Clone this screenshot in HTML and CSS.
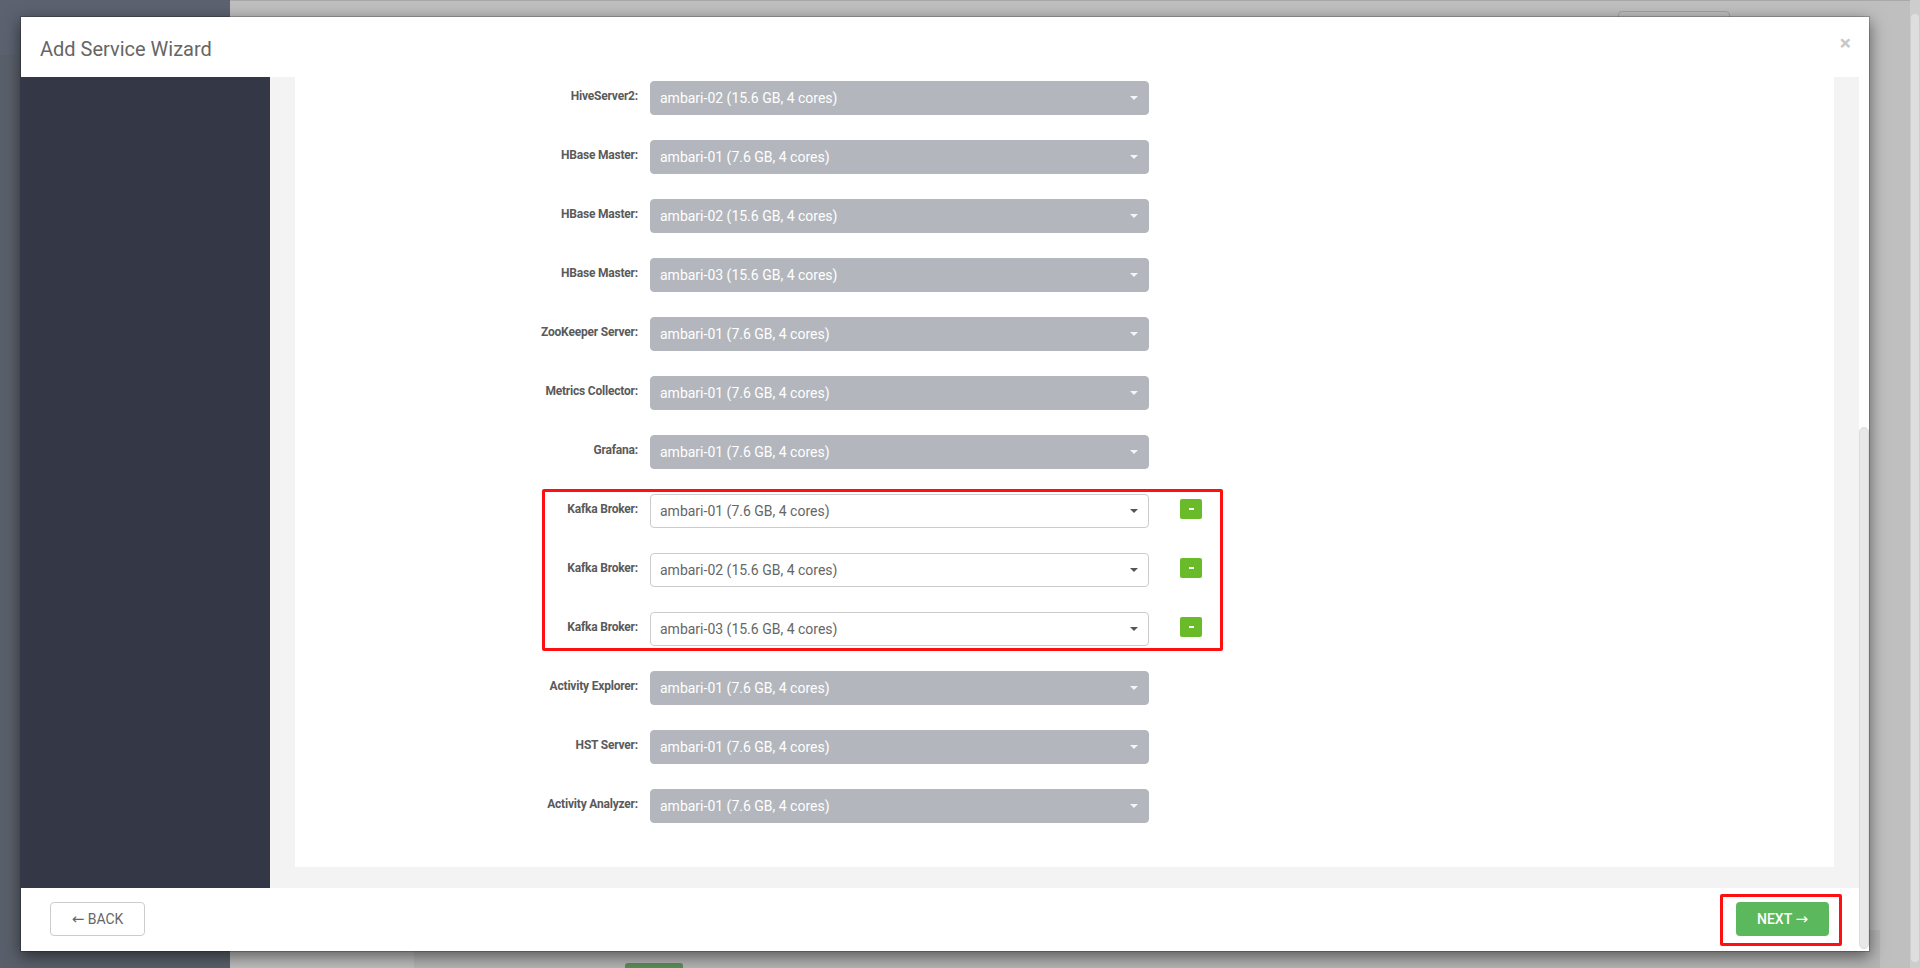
FILE: index.html
```html
<!DOCTYPE html>
<html>
<head>
  <title>Add Service Wizard</title>
  <link rel="stylesheet" href="styles.css">
</head>
<body>
  <div class="page">
    <div class="bg-side">
      <div class="bg-side-top"></div>
    </div>
    <div class="bg-main">
      <div class="bg-topbar">
        <div class="bg-outline-btn"></div>
      </div>
      <div class="bg-content">
        <div class="bg-card">
          <div class="bg-green-btn"></div>
        </div>
      </div>
    </div>
    <div class="page-scroll">
      <div class="page-scroll-thumb"></div>
    </div>
  </div>

  <div class="modal">
    <div class="modal-main">
      <div class="modal-header">
        <h4 class="modal-title">Add Service Wizard</h4>
        <span class="close">&times;</span>
      </div>

      <div class="modal-body">
        <div class="wizard-nav"></div>
        <div class="wizard-content">
          <div class="panel">
            <div class="form-row">
              <label class="control-label">HiveServer2:</label>
              <div class="select-wrap disabled">
                <select disabled><option>ambari-02 (15.6 GB, 4 cores)</option></select>
              </div>
            </div>
            <div class="form-row">
              <label class="control-label">HBase Master:</label>
              <div class="select-wrap disabled">
                <select disabled><option>ambari-01 (7.6 GB, 4 cores)</option></select>
              </div>
            </div>
            <div class="form-row">
              <label class="control-label">HBase Master:</label>
              <div class="select-wrap disabled">
                <select disabled><option>ambari-02 (15.6 GB, 4 cores)</option></select>
              </div>
            </div>
            <div class="form-row">
              <label class="control-label">HBase Master:</label>
              <div class="select-wrap disabled">
                <select disabled><option>ambari-03 (15.6 GB, 4 cores)</option></select>
              </div>
            </div>
            <div class="form-row">
              <label class="control-label">ZooKeeper Server:</label>
              <div class="select-wrap disabled">
                <select disabled><option>ambari-01 (7.6 GB, 4 cores)</option></select>
              </div>
            </div>
            <div class="form-row">
              <label class="control-label">Metrics Collector:</label>
              <div class="select-wrap disabled">
                <select disabled><option>ambari-01 (7.6 GB, 4 cores)</option></select>
              </div>
            </div>
            <div class="form-row">
              <label class="control-label">Grafana:</label>
              <div class="select-wrap disabled">
                <select disabled><option>ambari-01 (7.6 GB, 4 cores)</option></select>
              </div>
            </div>

            <div class="kafka-group">
              <div class="form-row">
                <label class="control-label">Kafka Broker:</label>
                <div class="select-wrap">
                  <select><option>ambari-01 (7.6 GB, 4 cores)</option></select>
                </div>
                <button class="btn-remove" type="button"><span></span></button>
              </div>
              <div class="form-row">
                <label class="control-label">Kafka Broker:</label>
                <div class="select-wrap">
                  <select><option>ambari-02 (15.6 GB, 4 cores)</option></select>
                </div>
                <button class="btn-remove" type="button"><span></span></button>
              </div>
              <div class="form-row">
                <label class="control-label">Kafka Broker:</label>
                <div class="select-wrap">
                  <select><option>ambari-03 (15.6 GB, 4 cores)</option></select>
                </div>
                <button class="btn-remove" type="button"><span></span></button>
              </div>
            </div>

            <div class="form-row">
              <label class="control-label">Activity Explorer:</label>
              <div class="select-wrap disabled">
                <select disabled><option>ambari-01 (7.6 GB, 4 cores)</option></select>
              </div>
            </div>
            <div class="form-row">
              <label class="control-label">HST Server:</label>
              <div class="select-wrap disabled">
                <select disabled><option>ambari-01 (7.6 GB, 4 cores)</option></select>
              </div>
            </div>
            <div class="form-row">
              <label class="control-label">Activity Analyzer:</label>
              <div class="select-wrap disabled">
                <select disabled><option>ambari-01 (7.6 GB, 4 cores)</option></select>
              </div>
            </div>
          </div>
        </div>
      </div>

      <div class="modal-footer">
        <button class="btn btn-back" type="button"><span class="arrow">&larr;</span> BACK</button>
        <div class="next-mark">
          <button class="btn btn-next" type="button">NEXT <span class="arrow">&rarr;</span></button>
        </div>
      </div>
    </div>
    <div class="modal-scroll">
      <div class="modal-scroll-thumb"></div>
    </div>
  </div>
</body>
</html>
```

FILE: styles.css
```css
/* page behind the dialog */
html, body {
  margin: 0;
  height: 968px;
  overflow: hidden;
}
body {
  font-family: Roboto, 'Liberation Sans', Arial, sans-serif;
  position: relative;
}
.page {
  display: flex;
  height: 968px;
}
.bg-side {
  width: 230px;
  background-color: #5a606b;
}
.bg-side-top {
  height: 55px;
  background-color: #5c6270;
}
.bg-main {
  flex: 1;
  background-color: #bfbfbf;
  border-top: 1px solid #a9a9a9;
}
.bg-topbar {
  height: 54px;
  display: flex;
  justify-content: flex-end;
  padding-right: 180px;
  padding-top: 10px;
  box-sizing: border-box;
}
.bg-outline-btn {
  width: 112px;
  height: 34px;
  border: 1px solid #a3a3a3;
  border-radius: 4px;
  box-sizing: border-box;
}
.bg-content {
  padding: 875px 30px 0 184px;
}
.bg-card {
  height: 60px;
  background-color: #b5b5b5;
  padding: 33px 0 0 211px;
  box-sizing: border-box;
}
.bg-green-btn {
  width: 58px;
  height: 20px;
  background-color: #5a8f5a;
  border-radius: 3px 3px 0 0;
}
.page-scroll {
  width: 10px;
  background-color: #cdcdcd;
  padding: 14px 1px 6px;
  box-sizing: border-box;
}
.page-scroll-thumb {
  height: 100%;
  background-color: #dedede;
  border-radius: 4px;
}

/* dialog */
.modal {
  position: absolute;
  top: 16px;
  left: 20px;
  width: 1850px;
  height: 936px;
  display: flex;
  background-color: #fff;
  box-shadow: 0 5px 15px rgba(0, 0, 0, 0.5);
  border: 1px solid rgba(0, 0, 0, 0.2);
  box-sizing: border-box;
  background-clip: padding-box;
}
.modal-main {
  width: 1839px;
  display: flex;
  flex-direction: column;
  margin-left: -1px;
  margin-top: -1px;
}
.modal-header {
  height: 61px;
  display: flex;
  align-items: center;
  justify-content: space-between;
  padding: 5px 8px 0 20px;
  box-sizing: border-box;
}
.modal-title {
  margin: 0;
  font-size: 20px;
  font-weight: 400;
  color: #666;
}
.close {
  font-size: 21px;
  font-weight: bold;
  color: #c8c8c8;
  line-height: 1;
  margin-bottom: 10px;
}
.modal-body {
  flex: 1;
  display: flex;
}
.wizard-nav {
  width: 250px;
  background-color: #343846;
}
.wizard-content {
  flex: 1;
  background-color: #f3f3f3;
  padding: 0 25px 21px;
}
.panel {
  background-color: #fff;
  padding: 4px 0 44px;
  display: flex;
  flex-direction: column;
  gap: 25px;
}
.form-row {
  display: flex;
  align-items: flex-start;
  height: 34px;
}
.control-label {
  width: 343px;
  margin-right: 12px;
  text-align: right;
  font-size: 12px;
  font-weight: bold;
  color: #5a5a5a;
  line-height: 16px;
  padding-top: 7px;
  letter-spacing: -0.2px;
}
.select-wrap {
  position: relative;
  width: 499px;
  height: 34px;
}
.select-wrap select {
  -webkit-appearance: none;
  appearance: none;
  width: 100%;
  height: 34px;
  margin: 0;
  padding: 0 30px 0 9px;
  font-family: Roboto, 'Liberation Sans', Arial, sans-serif;
  font-size: 14px;
  color: #666;
  background-color: #fff;
  border: 1px solid #ccc;
  border-radius: 4px;
  box-sizing: border-box;
  opacity: 1;
}
.select-wrap::after {
  content: "";
  position: absolute;
  right: 11px;
  top: 15px;
  border-left: 4px solid transparent;
  border-right: 4px solid transparent;
  border-top: 4px solid #555;
}
.select-wrap.disabled select {
  background-color: #b3b7bd;
  border-color: #b3b7bd;
  color: #fff;
}
.select-wrap.disabled::after {
  border-top-color: #f4f5f6;
}
.btn-remove {
  width: 22px;
  height: 20px;
  margin: 5px 0 0 31px;
  padding: 0;
  border: none;
  border-radius: 2px;
  background-color: #6abb2a;
  display: flex;
  align-items: center;
  justify-content: center;
}
.btn-remove span {
  width: 5px;
  height: 2px;
  background-color: #fff;
}

/* annotation boxes */
.kafka-group {
  position: relative;
  display: flex;
  flex-direction: column;
  gap: 25px;
}
.kafka-group::after {
  content: "";
  position: absolute;
  left: 247px;
  top: -5px;
  width: 681px;
  height: 162px;
  border: 3px solid #ff1010;
  border-radius: 2px;
  box-sizing: border-box;
}
.next-mark {
  position: relative;
}
.next-mark::after {
  content: "";
  position: absolute;
  left: -16px;
  top: -8px;
  width: 122px;
  height: 52px;
  border: 3px solid #ff1010;
  border-radius: 2px;
  box-sizing: border-box;
}

.modal-footer {
  height: 64px;
  display: flex;
  align-items: center;
  justify-content: space-between;
  padding: 0 30px;
  box-sizing: border-box;
}
.btn {
  height: 34px;
  border-radius: 4px;
  font-family: Roboto, 'Liberation Sans', Arial, sans-serif;
  font-size: 14px;
  cursor: pointer;
  padding: 0;
}
.btn .arrow {
  font-family: 'DejaVu Sans', sans-serif;
  font-size: 15px;
}
.btn-back {
  width: 95px;
  background-color: #fff;
  border: 1px solid #ccc;
  color: #666;
}
.btn-next {
  width: 93px;
  background-color: #5cb85c;
  border: none;
  color: #fff;
  font-weight: 500;
}
.modal-scroll {
  width: 10px;
  padding: 411px 0 2px;
  box-sizing: border-box;
  margin-top: -1px;
  margin-right: -1px;
}
.modal-scroll-thumb {
  height: 100%;
  background-color: #e8e8e8;
  border: 1px solid #dcdcdc;
  border-radius: 5px;
  box-sizing: border-box;
}
```
